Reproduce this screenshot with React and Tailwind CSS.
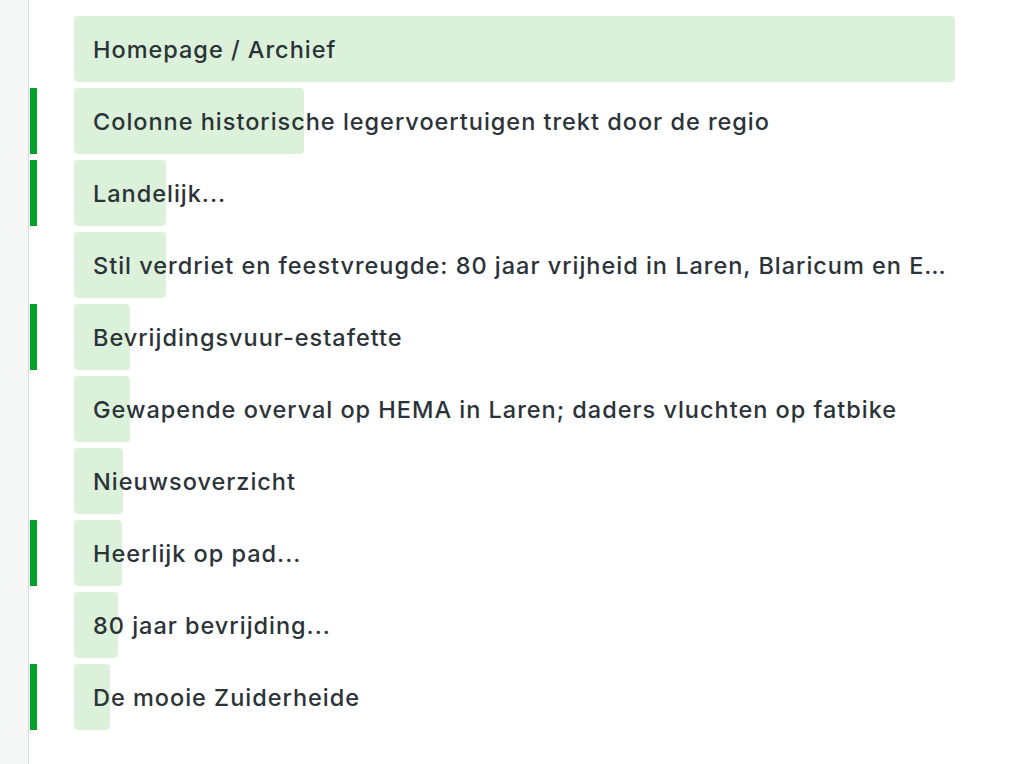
import React from "react";

const rows = [
  { t: "Homepage / Archief", w: 881, m: false },
  { t: "Colonne historische legervoertuigen trekt door de regio", w: 230, m: true },
  { t: "Landelijk...", w: 92, m: true },
  { t: "Stil verdriet en feestvreugde: 80 jaar vrijheid in Laren, Blaricum en Eemnes", w: 92, m: false },
  { t: "Bevrijdingsvuur-estafette", w: 56, m: true },
  { t: "Gewapende overval op HEMA in Laren; daders vluchten op fatbike", w: 56, m: false },
  { t: "Nieuwsoverzicht", w: 49, m: false },
  { t: "Heerlijk op pad...", w: 48, m: true },
  { t: "80 jaar bevrijding...", w: 44, m: false },
  { t: "De mooie Zuiderheide", w: 36, m: true },
];

export default function App() {
  return (
    <div className="flex w-[1024px] h-[764px] bg-white overflow-hidden" style={{ fontFamily: "Inter, 'Noto Sans', sans-serif" }}>
      <div className="w-[29px] shrink-0 bg-[#f6f7f7] border-r border-[#dcdcde]" />
      <div className="flex flex-col gap-[6px] pt-[16px]">
        {rows.map((r, i) => (
          <div key={i} className="flex h-[66px]">
            <div className={"w-[7px] ml-px shrink-0 " + (r.m ? "bg-[#00a32a]" : "")} />
            <div className="relative ml-[37px] w-[881px] h-full">
              <div className="absolute left-0 top-0 h-full rounded-[4px] bg-[#dbf1da]" style={{ width: r.w }} />
              <div className="relative flex items-center h-full pl-[19px] pr-[2px] pt-[1px] text-[23.5px] tracking-[0.98px] text-[#2c3338] font-medium">
                <span className="truncate">{r.t}</span>
              </div>
            </div>
          </div>
        ))}
      </div>
    </div>
  );
}
